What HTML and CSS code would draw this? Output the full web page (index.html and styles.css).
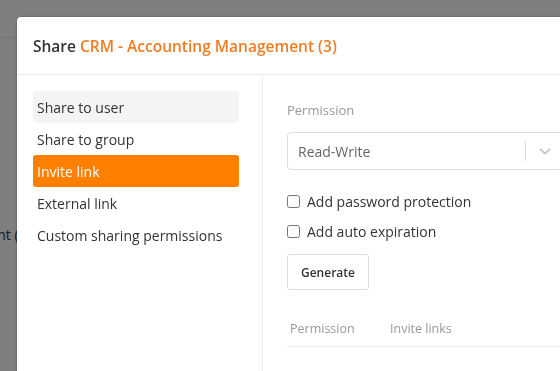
FILE: index.html
```html
<!DOCTYPE html>
<html lang="en">
<head>
    <meta charset="UTF-8">
    <meta name="viewport" content="width=device-width, initial-scale=1.0">
    <title>Share</title>
    <link rel="stylesheet" href="styles.css">
</head>
<body>
    <div class="page">
        <div class="page-header"></div>
        <div class="page-text">Accounting Management (3)</div>
    </div>
    <div class="overlay"></div>

    <div class="modal">
        <div class="modal-header">
            <span class="title">Share <span class="title-name">CRM - Accounting Management (3)</span></span>
        </div>
        <div class="modal-body">
            <div class="side">
                <div class="nav-item hover">Share to user</div>
                <div class="nav-item">Share to group</div>
                <div class="nav-item active">Invite link</div>
                <div class="nav-item">External link</div>
                <div class="nav-item">Custom sharing permissions</div>
            </div>
            <div class="content">
                <div class="label">Permission</div>
                <div class="select">
                    <span class="select-value">Read-Write</span>
                    <span class="select-sep"></span>
                    <span class="select-arrow">
                        <svg width="14" height="14" viewBox="0 0 14 14"><path d="M2 5 L7 9.5 L12 5" fill="none" stroke="#c8c8c8" stroke-width="1.8"/></svg>
                    </span>
                </div>
                <div class="checks">
                    <label class="check"><input type="checkbox"> Add password protection</label>
                    <label class="check"><input type="checkbox"> Add auto expiration</label>
                </div>
                <button class="btn">Generate</button>
                <div class="table-head">
                    <div class="col col-perm">Permission</div>
                    <div class="col">Invite links</div>
                </div>
            </div>
        </div>
    </div>
</body>
</html>
```

FILE: styles.css
```css
body {
    margin: 0;
    background-color: #fff;
    font-family: "Open Sans", "Noto Sans", sans-serif;
    color: #333;
    overflow: hidden;
    height: 100vh;
}
.page-header {
    height: 37px;
    border-bottom: 1px solid #eaeaea;
}
.page-text {
    position: absolute;
    top: 225px;
    left: -152px;
    font-size: 14px;
    color: #333;
}
.overlay {
    position: fixed;
    top: 0;
    left: 0;
    right: 0;
    bottom: 0;
    background-color: rgba(0, 0, 0, 0.5);
}
.modal {
    position: absolute;
    top: 17px;
    left: 17px;
    width: 620px;
    height: 420px;
    background-color: #fff;
    border-radius: 4px;
    box-shadow: 0 0 3px rgba(0, 0, 0, 0.3);
}
.modal-header {
    height: 57px;
    padding: 0 16px;
    display: flex;
    align-items: center;
    border-bottom: 1px solid #e9e9e9;
}
.title {
    font-size: 15.5px;
    font-weight: 600;
    color: #333;
}
.title-name {
    color: #ee7d24;
}
.modal-body {
    display: flex;
    height: 360px;
}
.side {
    width: 206px;
    padding: 16px 23px 0 16px;
    border-right: 1px solid #eee;
}
.nav-item {
    height: 32px;
    line-height: 33px;
    padding: 0 4px;
    font-size: 14px;
    color: #333;
    border-radius: 3px;
}
.nav-item.hover {
    background-color: #f4f4f4;
}
.nav-item.active {
    background-color: #ff8000;
    color: #fff;
}
.content {
    width: 276px;
    padding: 24px 24px 0 24px;
}
.label {
    font-size: 13px;
    line-height: 22px;
    color: #999;
}
.select {
    margin-top: 11px;
    height: 36px;
    border: 1px solid #ddd;
    border-radius: 4px;
    display: flex;
    align-items: center;
}
.select-value {
    flex: 1;
    padding-left: 10px;
    font-size: 14px;
    color: #666;
}
.select-sep {
    width: 1px;
    height: 20px;
    background-color: #ddd;
}
.select-arrow {
    width: 34px;
    padding-left: 2px;
    display: flex;
    justify-content: center;
}
.checks {
    margin-top: 16px;
}
.check {
    display: flex;
    align-items: center;
    height: 30px;
    font-size: 14px;
    color: #333;
}
.check input {
    margin: 0 7px 0 0;
    width: 13px;
    height: 13px;
}
.btn {
    margin-top: 8px;
    height: 36px;
    padding: 0 13px;
    background-color: #fff;
    border: 1px solid #ddd;
    border-radius: 3px;
    font-family: inherit;
    font-size: 12px;
    font-weight: 600;
    color: #333;
}
.table-head {
    margin-top: 20px;
    height: 36px;
    display: flex;
    align-items: center;
    border-bottom: 1px solid #eee;
}
.col {
    font-size: 12.5px;
    color: #999;
}
.col-perm {
    width: 100px;
    padding-left: 3px;
}
```
